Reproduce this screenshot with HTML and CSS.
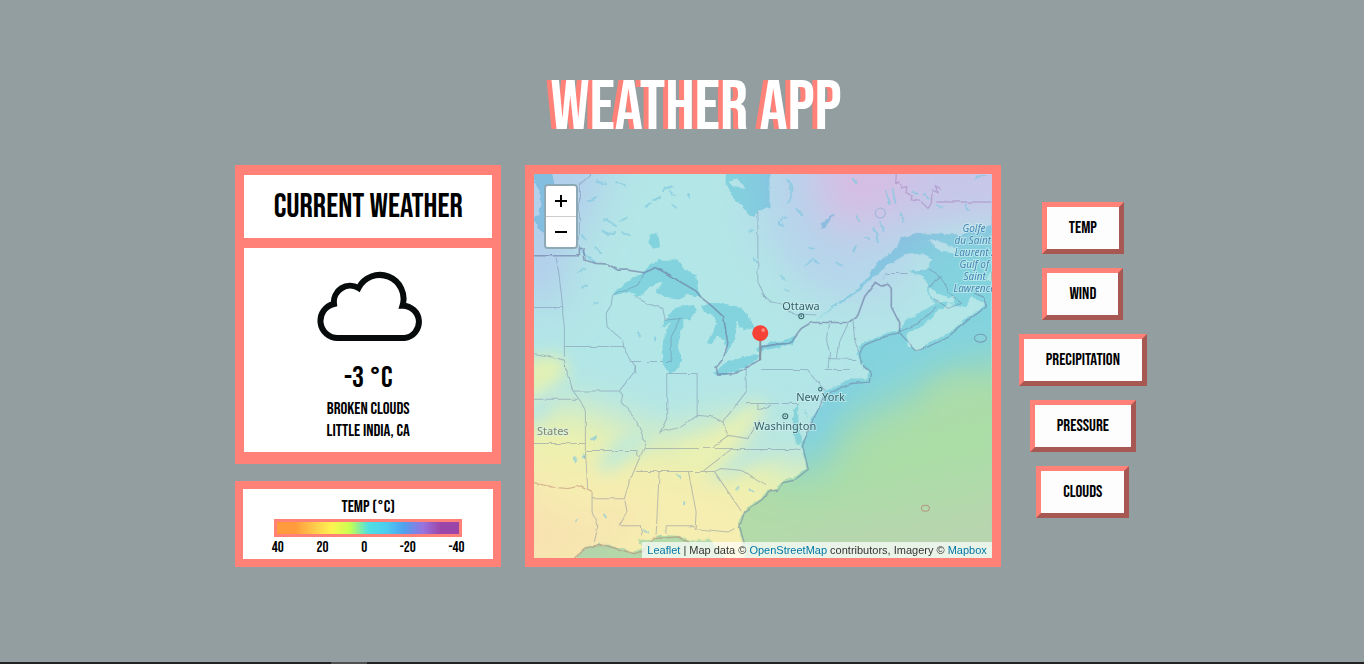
FILE: index.html
```html
<!DOCTYPE html>
<html lang="en">
<head>
<meta charset="utf-8">
<meta name="viewport" content="width=device-width, initial-scale=1">
<title>Weather App</title>
<link rel="stylesheet" href="styles.css">
</head>
<body>
<main class="page">
  <h1 class="title">WEATHER APP</h1>
  <div class="app">
    <div class="side">
      <section class="card">
        <h2 class="card-head">CURRENT WEATHER</h2>
        <div class="card-body">
          <svg class="cloud" viewBox="0 0 106 72" role="img" aria-label="Broken clouds">
            <path d="M21 68H87.500A16.200 16.200 0 0 0 85.500 35.700A23.800 23.800 0 0 0 41.500 18A16.300 16.300 0 0 0 17 34A17.200 17.200 0 0 0 21 68Z"/>
          </svg>
          <p class="degrees">-3 °C</p>
          <p class="detail">BROKEN CLOUDS</p>
          <p class="detail">LITTLE INDIA, CA</p>
        </div>
      </section>
      <section class="legend">
        <h3 class="legend-title">TEMP (°C)</h3>
        <div class="legend-bar"></div>
        <div class="legend-scale"><span>40</span><span>20</span><span>0</span><span>-20</span><span>-40</span></div>
      </section>
    </div>

    <section class="map" aria-label="Map">
      <svg class="map-art" viewBox="0 0 457 384" preserveAspectRatio="xMidYMid slice">
        <defs>
          <filter id="soft" x="-50%" y="-50%" width="200%" height="200%"><feGaussianBlur stdDeviation="20"/></filter>
          <filter id="mid" x="-50%" y="-50%" width="200%" height="200%"><feGaussianBlur stdDeviation="8"/></filter>
          <filter id="rough" x="-5%" y="-5%" width="110%" height="110%">
            <feTurbulence type="fractalNoise" baseFrequency="0.14" numOctaves="3" seed="4"/>
            <feDisplacementMap in="SourceGraphic" scale="5" xChannelSelector="R" yChannelSelector="G"/>
          </filter>
          <filter id="wavy" x="-5%" y="-5%" width="110%" height="110%">
            <feTurbulence type="fractalNoise" baseFrequency="0.1" numOctaves="2" seed="4"/>
            <feDisplacementMap in="SourceGraphic" scale="3" xChannelSelector="R" yChannelSelector="G"/>
          </filter>
        </defs>
        <rect width="457" height="384" fill="#b3e6e7"/>
        <g filter="url(#soft)">
          <path fill="#b2cfeb" d="M-40-40H85L60 40 35 85 30 135-40 120Z"/>
          <path fill="#b6d4eb" d="M215-40H500V50L400 58 340 115 290 130 230 70Z"/>
          <path fill="#bdd0ec" d="M240-40H500V50L380 58 290 60Z"/>
          <path fill="#d6bde3" d="M285-40H395L380 25 320 60 285 35Z"/>
          <path fill="#c8c6e8" d="M370-40H500V35L370 50Z"/>
          <path fill="#b6dcea" d="M310 120 375 90 400 95 340 150Z"/>
          <path fill="#eaf1ae" d="M-40 240 40 230 130 265 200 245 225 250 235 290 285 300 315 245 360 230 400 205 457 190 500 185V430H-40Z"/>
          <path fill="#f5eeb0" d="M-40 280 60 285 110 290 200 310 240 335 320 350 500 300V430H-40Z"/>
          <path fill="#f8e2b0" d="M-40 310 15 315 40 350 100 320 105 350 40 395-40 400Z"/>
          <path fill="#fae9b6" d="M260 350 500 310V430H240Z"/>
        </g>
        <g filter="url(#mid)">
          <path fill="#e2f1b2" d="M-10 185 25 180 35 200 15 212-10 235Z"/>
          <path fill="#b9e6e2" d="M-5 225 20 212 16 235 0 252-8 250Z"/>
          <path fill="#c2ead6" d="M60 292 85 262 120 250 110 275 75 298Z"/>
          <path fill="#b8e6e2" opacity=".8" d="M170 308 195 285 240 235 285 225 275 250 245 278 200 302Z"/>
          <path fill="#eaf1b2" d="M140 275 180 262 225 225 228 238 190 278 150 290Z"/>
          <path fill="#eef0ae" opacity=".4" d="M395 208 425 194 450 212V240L390 250Z"/>
          <path fill="#b3e4e9" opacity=".8" d="M275 220 325 190 320 215 295 245 280 280Z"/>
        </g>

        <g class="water" filter="url(#rough)">
          <g transform="translate(-13 -14) scale(.3333)">
            <path d="M39 30H88L100 72 75 80 72 225 60 218 48 188 39 180V168L55 165 60 110 45 75 39 70Z"/>
            <path fill-rule="evenodd" d="M615 30H745V145L715 148 697 172 680 162 655 130 635 110 613 66ZM622 62 645 56 668 70 668 86 640 82Z"/>
            <path d="M388 225 405 218 417 240 412 262 395 266 383 245Z"/>
            <path d="M275 405 310 370 360 342 380 320 410 300 470 298 490 330 525 342 530 385 540 410 500 405 470 415 430 410 405 392 425 370 410 368 385 380 370 400 340 410 345 398 300 402Z"/>
            <path d="M420 505 440 465 470 440 520 435 530 450 505 480 490 480 478 510 470 560 480 600 472 622 450 643 432 625 422 580 428 530 450 485 435 495Z"/>
            <path d="M540 440 570 428 640 440 665 445 690 480 715 515 690 505 665 510 640 480 648 510 635 550 618 578 610 540 590 530 570 552 558 545 575 520 585 490 575 465 545 455Z"/>
            <path d="M575 638 620 605 670 590 720 583 700 605 650 630 600 648Z"/>
            <path d="M700 565 735 550 780 540 825 530 815 552 770 562 710 575Z"/>
          </g>
          <g transform="translate(227 -14) scale(.3333)">
            <path fill-rule="evenodd" d="M162 484 220 435 285 390 320 350 350 305 400 270 420 235 460 218 600 224 650 208 720 185V1220H-40L-60 1140-70 1090-55 1055-20 1025 0 1013 20 987 45 987 60 963 95 955 135 925 130 895 118 855 140 815 150 775 180 735 188 695 270 655 315 655 322 635 300 610 288 580 300 550 330 540 380 515 410 512 430 485 480 455 520 430 500 405 500 370 480 345 440 335 500 325 510 295 480 280 430 285 370 320 315 370 290 395 220 440ZM435 525 490 490 530 455 560 430 610 440 630 410 675 430 660 450 620 470 560 520 500 550 470 572 440 555ZM505 385 540 405 580 415 575 430 530 425 505 405ZM502 240 540 245 590 270 580 280 540 275ZM680 340 700 330V365L680 358Z"/>
            <path d="M95 750 110 735 112 790 122 850 108 855 95 820ZM123 740 145 775 135 765Z"/>
            <path d="M180 190 215 162 220 168 190 200 178 208Z"/>
          </g>
          <g transform="translate(-13 191) scale(.3333)">
            <path d="M150 595 190 550 235 535 280 545 340 560 365 548 350 520 395 522 420 508 480 512 505 530 560 520 590 545 620 595Z"/>
          </g>
        </g>

        <g class="ponds" filter="url(#rough)">
          <path d="M62 7l10 3M83 9l8 2M55 27l7-4M71 45l12 7M68 56l6 4 8-2M87 58l9 3M86 47l7-3M47 62l5 3M112 33l5-4M120 26l6-3M130 16l8-4M136 18l5 3M138 30l4 4M54 83l6 6M47 76l7 8M44 98l7-3M48 113l5-2M62 73l5 6M153 21l3 2M215 58l3-3M219 85l5 3M60 128l4 1M254 5l4 12M258 18l-3 10M262 35l5 5M252 42l-6 6M244 48l5 4M275 73l5 1M281 87l4 2M271 91l8-6M251 115l4 2M247 103l5 2M301 88l6 3M318 6l4 2M323 40l2 8M340 54l4 14M346 47l3 10M352 18l4 12M358 15l3 14M366 40l3 8M330 63l5 2M322 72l-3 6M378 17l5 4M388 20l8 5M402 31l6 3M442 4l9-2M432 30l2 6M121 161v6M104 158l2 4M40 283l2 4M49 280v3M143 300l4 3M57 265l5-2M70 340l2 3M204 312l-2 4M216 315l3 3M150 328v2M44 345l-2 2M110 357l4 2"/>
        </g>
        <circle class="ring" cx="346" cy="39" r="5"/>

        <g class="borders" filter="url(#wavy)">
          <g transform="translate(-13 -14) scale(.3333)">
            <path class="major" d="M39 287H175V268H187L192 300 225 310 260 312 290 330 320 330 370 338 405 322 525 393 540 412 575 440 607 470 620 550 605 600 585 625 590 642 640 640 715 600 720 560 770 552 805 550 840 505 870 487H982L1010 465 1030 410 1062 367 1080 378 1100 372 1110 385V440L1135 490V515"/>
            <path d="M175 268V75L210 42M105 290 115 350 125 440V460L130 500V590M39 442H127M130 559H308M275 405 270 435 255 460 258 500 305 540 310 570 340 615 345 640M340 410 380 430 425 445 432 480 480 475 450 530V604M330 604H452M370 338 350 375 275 405M710 155V365L735 418M39 580 90 590 130 600 135 630"/>
          </g>
          <g transform="translate(227 -14) scale(.3333)">
            <path class="pale" d="M405 42 403 70 412 66 420 84 436 80 434 98 452 108 450 120 478 124 500 145 510 130 512 90 530 98 522 78 538 86M525 126H690"/>
            <path d="M0 400 30 425 60 432 90 460 165 465M202 487 195 540 205 575 200 625M262 487 235 545 228 595M275 480 280 540 292 575M200 595 285 598M365 360 375 340 440 340M0 628H135L190 690M190 628H265M415 515 470 490 525 440"/>
            <path class="coast" d="M300 610 295 580 310 555 380 525 415 518 435 540 465 572 500 560 560 530 620 480 675 440 665 410 640 400"/>
            <path d="M500 380 540 350 500 325M540 350 560 395 600 430 560 445 520 415"/>
            <path class="coast" d="M-50 1150-65 1100-50 1055 5 1016 24 992 49 990 64 968 99 960 141 927 124 857 156 777 194 702 270 670 324 666 328 635 305 615"/>
          </g>
          <g transform="translate(-13 191) scale(.3333)">
            <path d="M132 0 145 40 155 75 180 110 193 140V255L200 370M155 77H295L305 90 300 110 345 165 375 235 350 290 325 350 310 400 318 440 295 481H358L362 510M295 77 340 20 345 0M437 25V160L415 205M437 25H528V150M415 200 480 185 530 150 575 155 605 170 675 80V0M605 170 620 210 680 220 715 165M39 102H170M39 235H193M193 256H348M348 256 352 275M370 250H570L625 210M420 250H633L545 318M345 319H580L600 310 660 315 735 358M414 319 405 510M502 319 525 440 522 490 620 500 640 490M580 319 660 437M435 481H520M435 481V505M213 400H310M213 380V440L230 485 220 530M633 253H838M675 115H830M710 115V135L750 120"/>
            <path class="warm" d="M39 352 90 365 140 370 180 362 213 378M160 578 195 548 235 537 280 548 340 565 365 558 395 520 470 515 505 535"/>
          </g>
        </g>
        <ellipse class="isle" cx="446" cy="164" rx="6" ry="4"/>
        <ellipse class="isle isle-warm" cx="391" cy="334" rx="4" ry="3"/>

        <g class="places">
          <text x="248" y="136">Ottawa</text>
          <text x="262" y="227">New York</text>
          <text x="220" y="256">Washington</text>
          <text class="country" x="3" y="261">States</text>
          <circle cx="267" cy="142" r="2.500"/><circle cx="267" cy="142" r=".3"/>
          <circle cx="251" cy="242" r="2.500"/><circle cx="251" cy="242" r=".3"/>
          <circle cx="286" cy="215" r="1.700"/>
        </g>
        <g class="sea">
          <text x="428" y="58">Golfe</text>
          <text x="420" y="70">du Saint</text>
          <text x="420" y="82">Laurent /</text>
          <text x="425" y="94">Gulf of</text>
          <text x="429" y="106">Saint</text>
          <text x="419" y="118">Lawrence</text>
        </g>
        <path d="M226 165V186" stroke="#8795a0" stroke-width="2"/>
        <circle cx="226" cy="159" r="8" fill="#f44336"/>
        <circle cx="229" cy="156" r="1.800" fill="#ff8a80"/>
      </svg>
      <div class="zoom">
        <button type="button" aria-label="Zoom in"><svg viewBox="0 0 12 12"><path d="M6 0V12M0 6H12"/></svg></button>
        <button type="button" aria-label="Zoom out"><svg viewBox="0 0 12 12"><path d="M0 6H12"/></svg></button>
      </div>
      <div class="credit"><a href="#">Leaflet</a> | Map data © <a href="#">OpenStreetMap</a> contributors, Imagery © <a href="#">Mapbox</a></div>
    </section>

    <nav class="layers">
      <button type="button" class="layer">TEMP</button>
      <button type="button" class="layer">WIND</button>
      <button type="button" class="layer">PRECIPITATION</button>
      <button type="button" class="layer">PRESSURE</button>
      <button type="button" class="layer">CLOUDS</button>
    </nav>
  </div>
</main>
<footer class="strip"><div class="strip-tab"></div></footer>
</body>
</html>
```
FILE: styles.css
```css
* { box-sizing: border-box; }

body {
  margin: 0;
  min-height: 100vh;
  display: flex;
  flex-direction: column;
  background: #929e9f;
  color: #000;
  font-family: "Bebas Neue", "Liberation Sans Narrow", "Liberation Sans", sans-serif;
}

h1, h2, h3, p { margin: 0; font-weight: normal; }

.page { flex: 1; padding: 68px 0 0 12px; }

.title {
  padding-left: 16px;
  text-align: center;
  font-size: 70px;
  line-height: 80px;
  color: #fff;
  text-shadow: -5px 0 0 #ff8178;
}

.app {
  width: 67%;
  max-width: 1200px;
  margin: 17px auto 0;
  display: grid;
  grid-template-columns: 266fr 475fr minmax(0, 116fr);
  column-gap: 24px;
}

.side { display: flex; flex-direction: column; gap: 17px; }

.card {
  flex: 1;
  display: flex;
  flex-direction: column;
  gap: 10px;
  padding: 10px 9px 12px;
  background: #ff8178;
  text-align: center;
}

.card-head { padding-top: 1px; background: #fff; font-size: 33px; line-height: 62px; }

.card-body {
  flex: 1;
  display: flex;
  flex-direction: column;
  align-items: center;
  padding-top: 22px;
  background: #fff;
}

.cloud { width: 106px; height: 72px; margin-left: 4px; }
.cloud path { fill: none; stroke: #070b0b; stroke-width: 6; }

.degrees { margin: 18px 0 2px; font-size: 30px; line-height: 36px; }
.detail { font-size: 17px; line-height: 22px; }

.legend {
  display: flex;
  flex-direction: column;
  align-items: center;
  padding-top: 6px;
  height: 86px;
  border: 8px solid #ff8178;
  background: #fff;
  font-size: 15px;
}
.legend-title { font-size: 17px; line-height: 24px; }
.legend-bar {
  width: 75%;
  height: 21px;
  border: 3px solid #ff8178;
  background: linear-gradient(90deg, #ff9a3d 0 10%, #ffc84b 20%, #fff250 30%, #c8ff50 40%, #4fe0e0 50%, #4ccdf0 60%, #509fee 70%, #9874df 80%, #9c45a8 90% 100%);
}
.legend-scale { width: 77%; display: flex; justify-content: space-between; line-height: 22px; }

.map {
  position: relative;
  border: 9px solid #ff8178;
  aspect-ratio: 475 / 402;
  overflow: hidden;
  font-family: "Liberation Sans", sans-serif;
}
.map-art { display: block; width: 100%; height: 100%; isolation: isolate; }
.water { fill: #bbeaf5; mix-blend-mode: multiply; }
.ponds { fill: none; stroke: #80c8df; stroke-width: 2; stroke-linecap: round; opacity: 0.65; }
.ring { fill: none; stroke: #9fb4dc; stroke-width: 1; }
.borders { fill: none; stroke: #6b77a0; stroke-opacity: 0.42; stroke-width: 3; }
.major { stroke-opacity: 0.6; stroke-width: 5; }
.coast { stroke-opacity: 0.5; stroke-width: 4; }
.pale { stroke: #9c72b0; stroke-width: 4; }
.warm { stroke: #b07068; stroke-width: 4; }
.isle { fill: none; stroke: #6b77a0; stroke-opacity: 0.6; stroke-width: 1; }
.isle-warm { stroke: #b07068; }
.places { font-family: "Noto Sans", sans-serif; font-size: 11px; fill: #36626b; }
.places text, .sea text { paint-order: stroke; stroke: #d4f0f0; stroke-opacity: 0.6; stroke-width: 2; }
.places circle { fill: none; stroke: #36626b; stroke-width: 1; }
.places .country { fill: #85866c; }
.sea { font-family: "Noto Sans", sans-serif; font-size: 10px; font-style: italic; fill: #4688b5; }

.zoom {
  position: absolute;
  top: 10px;
  left: 10px;
  border: 2px solid #8da9b5;
  border-radius: 4px;
  overflow: hidden;
}
.zoom button {
  display: flex;
  align-items: center;
  justify-content: center;
  width: 30px;
  height: 30px;
  padding: 0;
  border: 0;
  background: #fff;
}
.zoom button:first-child { height: 31px; border-bottom: 1px solid #ccc; }
.zoom svg { width: 12px; height: 12px; stroke: #000; stroke-width: 2; }

.credit {
  position: absolute;
  right: 0;
  bottom: 0;
  padding: 0 5px;
  background: rgba(255, 255, 255, 0.7);
  color: #333;
  font-size: 11px;
  line-height: 16px;
  white-space: nowrap;
}
.credit a { color: #0078a8; text-decoration: none; }

.layers {
  display: flex;
  flex-direction: column;
  align-items: center;
  gap: 14px;
  padding-top: 37px;
}
.layer {
  height: 52px;
  padding: 0 22px;
  border: 5px solid;
  border-color: #ff8178 #a85852 #a85852 #ff8178;
  background: #fdfdfd;
  color: #000;
  font: 17px "Bebas Neue", "Liberation Sans Narrow", "Liberation Sans", sans-serif;
}

.strip { height: 2px; background: #222; }
.strip-tab { width: 36px; height: 2px; margin-left: 331px; background: #505050; }
```
